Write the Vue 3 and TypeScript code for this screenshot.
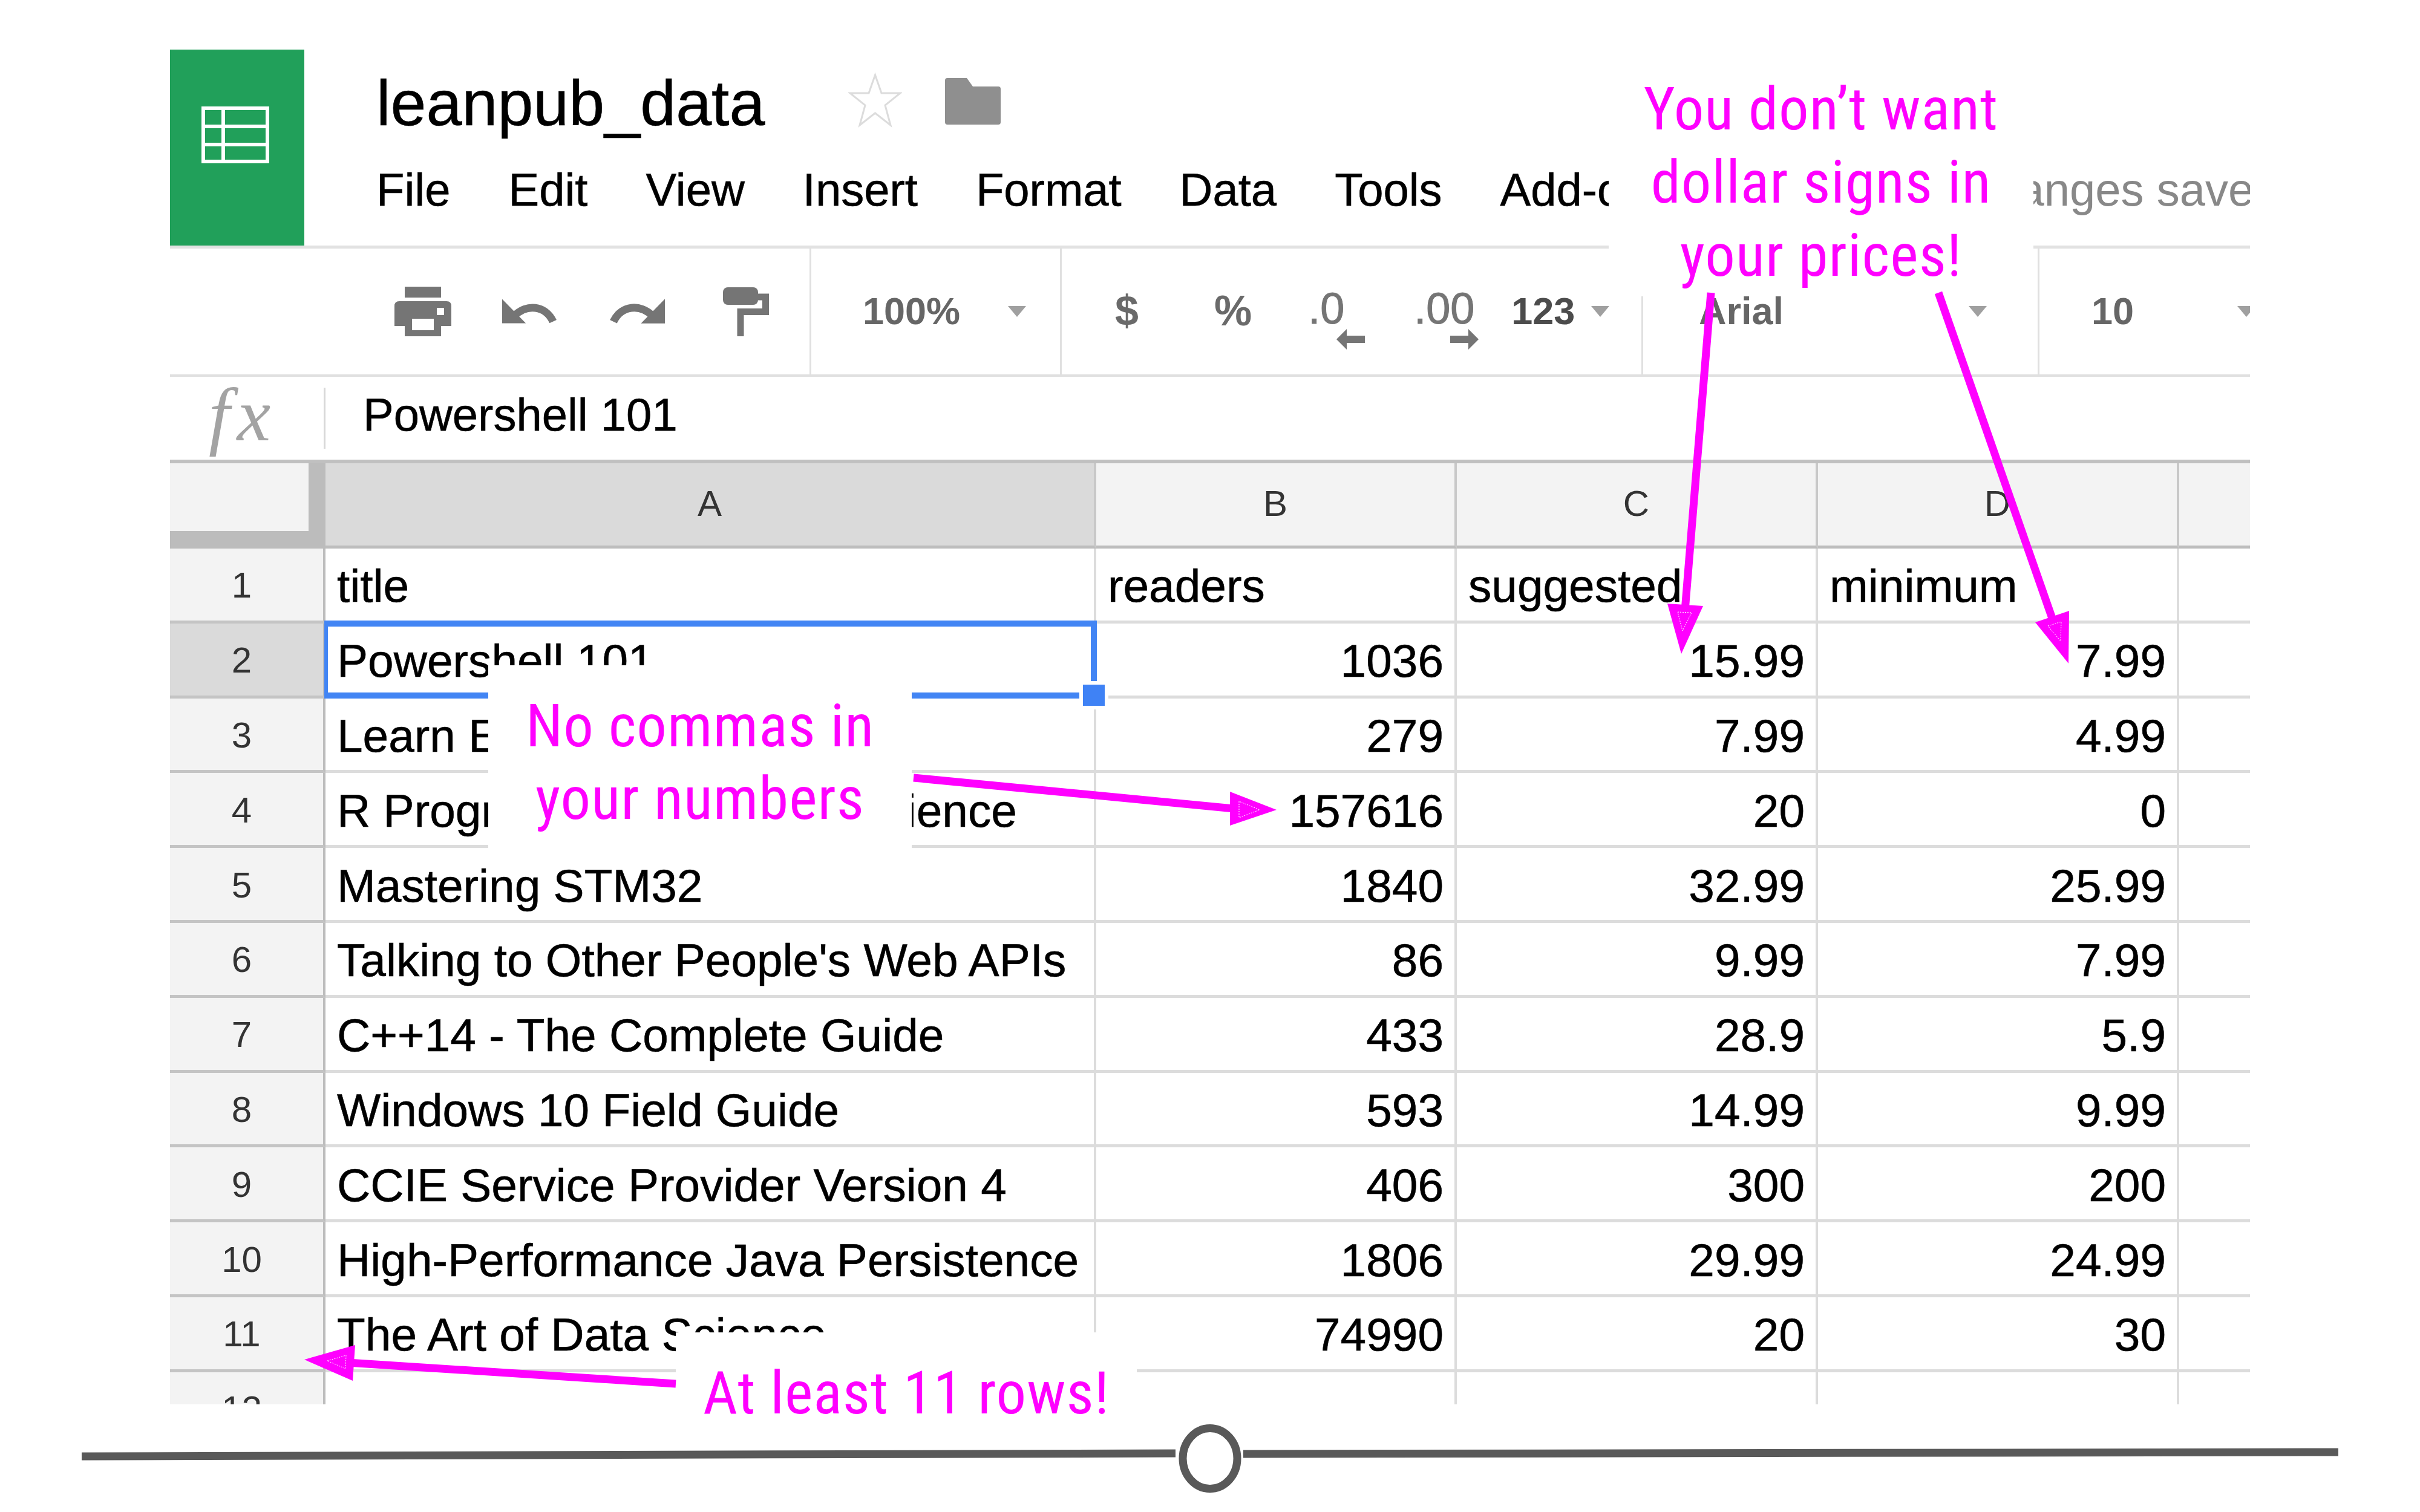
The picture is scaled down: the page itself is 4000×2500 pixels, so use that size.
<script setup lang="ts">
interface Row {
  title: string
  readers: string
  suggested: string
  minimum: string
}

const menus = ['File', 'Edit', 'View', 'Insert', 'Format', 'Data', 'Tools', 'Add-ons']
const columns = ['A', 'B', 'C', 'D', '']

const rows: Row[] = [
  { title: 'title', readers: 'readers', suggested: 'suggested', minimum: 'minimum' },
  { title: 'Powershell 101', readers: '1036', suggested: '15.99', minimum: '7.99' },
  { title: 'Learn Excel', readers: '279', suggested: '7.99', minimum: '4.99' },
  { title: 'R Programming for Data Science', readers: '157616', suggested: '20', minimum: '0' },
  { title: 'Mastering STM32', readers: '1840', suggested: '32.99', minimum: '25.99' },
  { title: "Talking to Other People's Web APIs", readers: '86', suggested: '9.99', minimum: '7.99' },
  { title: 'C++14 - The Complete Guide', readers: '433', suggested: '28.9', minimum: '5.9' },
  { title: 'Windows 10 Field Guide', readers: '593', suggested: '14.99', minimum: '9.99' },
  { title: 'CCIE Service Provider Version 4', readers: '406', suggested: '300', minimum: '200' },
  { title: 'High-Performance Java Persistence', readers: '1806', suggested: '29.99', minimum: '24.99' },
  { title: 'The Art of Data Science', readers: '74990', suggested: '20', minimum: '30' },
  { title: '', readers: '', suggested: '', minimum: '' }
]
</script>

<template>
  <div class="page">
    <div class="sheet">
      <header class="top">
        <div class="logo">
          <svg width="112" height="94" viewBox="0 0 112 94" fill="none" stroke="#fff" stroke-width="6">
            <rect x="3" y="3" width="106" height="88" />
            <path d="M36 3V91M3 33H109M3 63H109" />
          </svg>
        </div>
        <div class="doc">
          <div class="title-row">
            <span class="title">leanpub_data</span>
            <svg class="star" width="89" height="92" viewBox="0 0 89 92" fill="none" stroke="#dcdcdc" stroke-width="3">
              <path d="M44.5 4L55 34H86L61 54L70 87L44.5 67L19 87L28 54L3 34H34Z" />
            </svg>
            <svg class="folder" width="92" height="77" viewBox="0 0 92 77" fill="#8f8f8f">
              <path d="M4 0H36L46 14H88Q92 14 92 18V73Q92 77 88 77H4Q0 77 0 73V4Q0 0 4 0Z" />
            </svg>
          </div>
          <nav class="menu">
            <span v-for="item in menus" :key="item">{{ item }}</span>
            <span class="saved">All changes saved in Drive</span>
          </nav>
        </div>
      </header>

      <div class="toolbar">
        <div class="group group-file">
          <svg width="94" height="82" viewBox="0 0 94 82" fill="#757575">
            <rect x="17" width="60" height="18" />
            <path fill-rule="evenodd" d="M8 24H86Q94 24 94 32V65H77V82H17V65H0V32Q0 24 8 24ZM29 53V72H65V53ZM70 35V47H82V35Z" />
          </svg>
          <svg class="undo" width="92" height="42" viewBox="0 0 94 42" fill="#757575">
            <g transform="matrix(-1 0 0 1 94 0)">
              <path d="M7 38C20 10 52 8 72 28" fill="none" stroke="#757575" stroke-width="13" />
              <path d="M93 0V41H53Z" />
            </g>
          </svg>
          <svg class="redo" width="93" height="42" viewBox="0 0 94 42" fill="#757575">
            <path d="M7 38C20 10 52 8 72 28" fill="none" stroke="#757575" stroke-width="13" />
            <path d="M93 0V41H53Z" />
          </svg>
          <svg class="paint" width="76" height="81" viewBox="0 0 76 81" fill="#757575">
            <rect width="58" height="29" rx="8" />
            <path d="M58 16H70.5V40.5H29V81" fill="none" stroke="#757575" stroke-width="11" />
          </svg>
        </div>
        <div class="group group-zoom">
          <span class="tool-text">100%</span>
          <i class="caret caret-zoom"></i>
        </div>
        <div class="group group-format">
          <span class="tool-text big">$</span>
          <span class="tool-text big percent">%</span>
          <span class="decimal decimal-less">
            .0
            <svg width="47" height="34" viewBox="0 0 47 34" fill="#757575">
              <path d="M0 17L17 0V11H47V23H17V34Z" />
            </svg>
          </span>
          <span class="decimal decimal-more">
            .00
            <svg width="47" height="34" viewBox="0 0 47 34" fill="#757575">
              <path d="M47 17L30 0V11H0V23H30V34Z" />
            </svg>
          </span>
          <span class="tool-text number">123</span>
          <i class="caret caret-number"></i>
        </div>
        <div class="group group-font">
          <span class="tool-text">Arial</span>
          <i class="caret caret-font"></i>
        </div>
        <div class="group group-size">
          <span class="tool-text">10</span>
          <i class="caret caret-size"></i>
        </div>
      </div>

      <div class="formula">
        <span class="fx">fx</span>
        <span class="formula-sep"></span>
        <span class="formula-text">Powershell 101</span>
      </div>

      <div class="grid">
        <div class="corner"></div>
        <div
          v-for="col in columns"
          :key="col"
          :class="['col-head', { active: col === 'A' }]"
        >
          {{ col }}
        </div>

        <template v-for="(row, i) in rows" :key="i">
          <div :class="['row-head', { active: i === 1 }]">{{ i + 1 }}</div>
          <div class="cell">{{ row.title }}</div>
          <div :class="['cell', { num: i > 0 }]">{{ row.readers }}</div>
          <div :class="['cell', { num: i > 0 }]">{{ row.suggested }}</div>
          <div :class="['cell', { num: i > 0 }]">{{ row.minimum }}</div>
          <div class="cell"></div>
        </template>

        <div class="selection"></div>
        <div class="handle"></div>
      </div>
    </div>

    <svg class="divider" width="4000" height="178" viewBox="0 0 4000 178" fill="none" stroke="#595959" stroke-width="13">
      <path d="M135 86L1943 81M2055 82L3865 79" />
      <ellipse cx="2000" cy="89.5" rx="45" ry="50" />
    </svg>

    <!-- annotations drawn over the screenshot -->
    <div class="note note-prices">You don’t want<br />dollar signs in<br />your prices!</div>
    <div class="note note-commas">No commas in<br />your numbers</div>
    <div class="note note-rows">At least 11 rows!</div>

    <svg class="arrows" width="4000" height="2500" viewBox="0 0 4000 2500" fill="#ff00ff" stroke="#ff00ff">
      <g stroke-width="13" fill="none">
        <path d="M2828 484L2785 1010" />
        <path d="M3204 484L3393 1025" />
        <path d="M1510 1286L2040 1337" />
        <path d="M1117 2288L575 2253" />
      </g>
      <g stroke="none">
        <path d="M2779 1081L2756 998L2815 1002Z" />
        <path d="M3419 1097L3364 1029L3420 1010Z" />
        <path d="M2110 1339L2033 1309L2033 1365Z" />
        <path d="M503 2248L587 2224L583 2283Z" />
      </g>
      <g class="head-marks" fill="none" stroke="#fff">
        <path d="M2773 1012L2796 1013L2781 1043Z" />
        <path d="M3385 1035L3407 1028L3406 1060Z" />
        <path d="M2048 1325L2048 1352L2082 1339Z" />
        <path d="M541 2250L572 2241L571 2263Z" />
      </g>
    </svg>
  </div>
</template>

<style scoped>
.page {
  position: relative;
  width: 4000px;
  height: 2500px;
  padding-top: 82px;
  box-sizing: border-box;
  overflow: hidden;
  background: #fff;
  color: #000;
  font-family: "Liberation Sans", Arial, sans-serif;
}

.sheet {
  width: 3438px;
  height: 2240px;
  margin-left: 281px;
  overflow: hidden;
}

/* header */
.top {
  display: flex;
  height: 324px;
  border-bottom: 5px solid #e2e2e2;
}

.logo {
  flex: none;
  width: 222px;
  height: 324px;
  background: #21a05a;
  padding: 94px 0 0 52px;
  box-sizing: border-box;
}

.logo svg {
  display: block;
}

.doc {
  flex: 1;
  min-width: 0;
  padding: 8px 0 0 119px;
}

.title-row {
  display: flex;
  align-items: center;
  height: 160px;
}

.title {
  flex: none;
  font-size: 106px;
  line-height: 160px;
  -webkit-text-stroke: 0.6px #000;
}

.star {
  flex: none;
  margin: 0 0 8px 137px;
}

.folder {
  flex: none;
  margin: 0 0 6px 71px;
}

.menu {
  display: flex;
  gap: 96px;
  margin-top: 19px;
  font-size: 76px;
  line-height: 90px;
  white-space: nowrap;
  -webkit-text-stroke: 0.6px #000;
}

.menu span {
  flex: none;
}

.menu .saved {
  margin-left: 292px;
  color: #888;
  font-size: 76px;
  -webkit-text-stroke: 0;
}

/* toolbar */
.toolbar {
  display: flex;
  height: 208px;
  border-bottom: 4px solid #e0e0e0;
  color: #666;
}

.group {
  display: flex;
  flex: none;
  align-items: center;
  box-sizing: border-box;
  border-right: 3px solid #e0e0e0;
  height: 208px;
}

.group-file {
  width: 1060px;
  padding-left: 371px;
}

.undo {
  margin-left: 83px;
}

.redo {
  margin-left: 86px;
}

.paint {
  margin-left: 95px;
}

.group-zoom {
  width: 414px;
  padding-left: 85px;
}

.group-format {
  width: 961px;
  padding-left: 88px;
}

.group-font {
  width: 655px;
  padding-left: 92px;
}

.group-size {
  width: 360px;
  border-right: 0;
  padding-left: 86px;
}

.tool-text {
  flex: none;
  margin-bottom: 3px;
  font-size: 63px;
  font-weight: 700;
}

.tool-text.big {
  font-size: 70px;
  color: #6a6a6a;
}

.tool-text.percent {
  margin-left: 125px;
}

.tool-text.number {
  margin-left: 65px;
  color: #4c4c4c;
}

.decimal {
  position: relative;
  flex: none;
  height: 80px;
  margin-bottom: 10px;
  font-size: 72px;
  line-height: 80px;
  color: #757575;
  -webkit-text-stroke: 1px #757575;
}

.decimal svg {
  position: absolute;
  top: 74px;
}

.decimal-less {
  width: 175px;
  margin-left: 93px;
}

.decimal-less svg {
  left: 47px;
}

.decimal-more {
  width: 96px;
}

.decimal-more svg {
  left: 60px;
}

.caret {
  flex: none;
  width: 0;
  height: 0;
  border-top: 18px solid #a0a0a0;
  border-left: 15px solid transparent;
  border-right: 15px solid transparent;
}

.caret-zoom {
  margin-left: 79px;
}

.caret-number {
  margin-left: 27px;
}

.caret-font {
  margin-left: 306px;
}

.caret-size {
  margin-left: 171px;
}

/* formula bar */
.formula {
  display: flex;
  align-items: center;
  height: 137px;
}

.fx {
  flex: none;
  width: 254px;
  box-sizing: border-box;
  margin-bottom: 10px;
  padding-left: 64px;
  font-family: "Liberation Serif", serif;
  font-style: italic;
  font-size: 125px;
  letter-spacing: 12px;
  color: #a3a3a3;
}

.formula-sep {
  flex: none;
  width: 3px;
  height: 101px;
  background: #d8d8d8;
}

.formula-text {
  flex: none;
  margin-left: 62px;
  margin-bottom: 12px;
  font-size: 76px;
  -webkit-text-stroke: 0.6px #000;
}

/* grid */
.grid {
  position: relative;
  display: grid;
  grid-template-columns: 257px 1274px 596px 597px 597px 200px;
  grid-template-rows: 141px;
  grid-auto-rows: 123.8px;
  border-top: 6px solid #c0c0c0;
}

.corner {
  box-sizing: border-box;
  background: #f3f3f3;
  border-right: 28px solid #bcbcbc;
  border-bottom: 29px solid #bcbcbc;
}

.col-head {
  display: flex;
  align-items: center;
  justify-content: center;
  box-sizing: border-box;
  padding-bottom: 3px;
  background: #f3f3f3;
  border-right: 4px solid #c8c8c8;
  border-bottom: 5px solid #bdbdbd;
  font-size: 60px;
  color: #333;
}

.col-head.active {
  background: #dadada;
}

.row-head {
  display: flex;
  align-items: center;
  justify-content: center;
  box-sizing: border-box;
  padding: 3px 16px 0 0;
  background: #f3f3f3;
  border-right: 4px solid #bdbdbd;
  border-bottom: 5px solid #c4c4c4;
  font-size: 60px;
  color: #333;
}

.row-head.active {
  background: #dadada;
}

.cell {
  display: flex;
  align-items: center;
  box-sizing: border-box;
  padding: 6px 18px 0 19px;
  overflow: hidden;
  white-space: nowrap;
  border-right: 4px solid #dcdcdc;
  border-bottom: 5px solid #dcdcdc;
  font-size: 76.6px;
  -webkit-text-stroke: 0.6px #000;
}

.cell.num {
  justify-content: flex-end;
}

.selection {
  position: absolute;
  left: 255px;
  top: 260px;
  width: 1277px;
  height: 129px;
  box-sizing: border-box;
  border: 10px solid #4285f4;
  border-left-width: 6px;
}

.handle {
  position: absolute;
  left: 1509px;
  top: 366px;
  width: 36px;
  height: 35px;
  background: #3f82f5;
  outline: 6px solid #fff;
}

/* footer rule */
.divider {
  display: block;
}

/* annotations */
.note {
  position: absolute;
  box-sizing: border-box;
  background: #fff;
  color: #ff00ff;
  text-align: center;
  white-space: nowrap;
  font-family: Roboto, "Liberation Sans", sans-serif;
  font-size: 99px;
  font-stretch: 75%;
  letter-spacing: 1px;
  line-height: 121px;
}

.note-prices {
  left: 2659px;
  top: 100px;
  width: 702px;
  height: 390px;
  padding-top: 20px;
}

.note-commas {
  left: 807px;
  top: 1100px;
  width: 700px;
  height: 312px;
  padding-top: 40px;
  line-height: 120px;
}

.note-rows {
  left: 1117px;
  top: 2203px;
  width: 762px;
  height: 142px;
  padding-top: 40px;
}

.arrows {
  position: absolute;
  left: 0;
  top: 0;
  pointer-events: none;
}

.head-marks {
  stroke-width: 1px;
  stroke-dasharray: 2 2;
}
</style>

<style>
body {
  background: #fff;
}
</style>
